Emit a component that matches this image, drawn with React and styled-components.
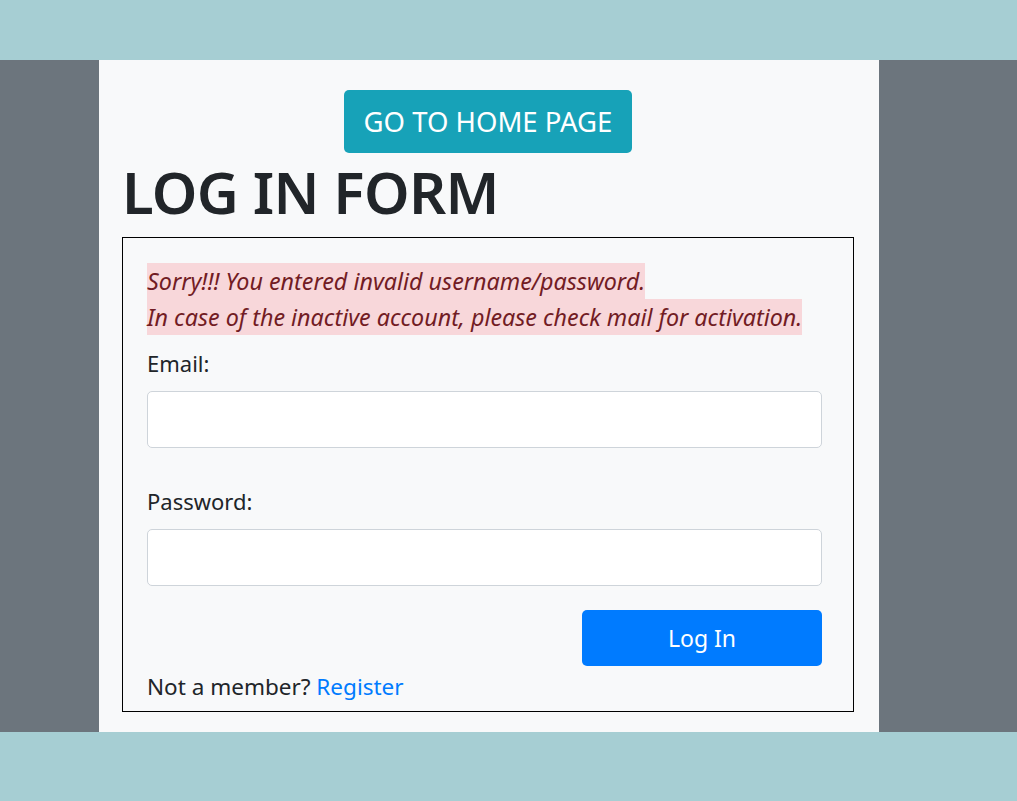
import styled, { createGlobalStyle } from 'styled-components';

const GlobalStyle = createGlobalStyle`
  body {
    margin: 0;
    font-family: "Noto Sans", "Open Sans", sans-serif;
    color: #212529;
    background: #6c757d;
  }
`;

const Page = styled.div`
  display: flex;
  flex-direction: column;
  min-height: 801px;
`;

const Band = styled.div`
  height: ${(props) => props.$height}px;
  background: #a6ced3;
`;

const Middle = styled.div`
  flex: 1;
  display: flex;
  background: #6c757d;
  padding-left: 99px;
`;

const Panel = styled.main`
  width: 780px;
  background: #f8f9fa;
  padding: 30px 25px 20px 23px;
  box-sizing: border-box;
  display: flex;
  flex-direction: column;
`;

const HomeButton = styled.a`
  align-self: center;
  padding: 0 20px;
  height: 63px;
  display: flex;
  align-items: center;
  background: #17a2b8;
  color: #fff;
  font-size: 27.5px;
  border-radius: 5px;
  text-decoration: none;
`;

const Title = styled.h1`
  margin: 4px 0 10px;
  font-size: 58px;
  font-weight: 600;
  line-height: 70px;
  letter-spacing: -0.65px;
`;

const FormBox = styled.form`
  border: 1px solid #000;
  padding: 25px 31px 9px 24px;
  display: flex;
  flex-direction: column;
`;

const Alert = styled.p`
  margin: 0 0 14px;
  font-style: italic;
  font-size: 23.3px;
  line-height: 36px;
  color: #721c24;

  span {
    background: #f8d7da;
    padding: 2px 0;
  }
`;

const Label = styled.label`
  display: block;
  font-size: 22px;
  line-height: 28px;
  margin-bottom: 14px;
`;

const Input = styled.input`
  display: block;
  width: 100%;
  box-sizing: border-box;
  height: 57px;
  border: 1px solid #ced4da;
  border-radius: 5px;
  background: #fff;
  margin-bottom: ${(props) => props.$gap}px;
  font-size: 20px;
  padding: 0 16px;
`;

const SubmitRow = styled.div`
  display: flex;
  justify-content: flex-end;
  margin-bottom: 6px;
`;

const SubmitButton = styled.button`
  width: 240px;
  height: 56px;
  border: none;
  border-radius: 5px;
  background: #007bff;
  color: #fff;
  font-family: inherit;
  font-size: 23px;
`;

const Footer = styled.p`
  margin: 0;
  font-size: 22.5px;
  line-height: 30px;

  a {
    color: #007bff;
    text-decoration: none;
  }
`;

export default function App() {
  return (
    <>
      <GlobalStyle />
      <Page>
        <Band $height={60} />
        <Middle>
          <Panel>
            <HomeButton href="#">GO TO HOME PAGE</HomeButton>
            <Title>LOG IN FORM</Title>
            <FormBox onSubmit={(e) => e.preventDefault()}>
              <Alert>
                <span>Sorry!!! You entered invalid username/password.</span>
                <br />
                <span>In case of the inactive account, please check mail for activation.</span>
              </Alert>
              <Label htmlFor="email">Email:</Label>
              <Input id="email" type="email" $gap={39} />
              <Label htmlFor="password">Password:</Label>
              <Input id="password" type="password" $gap={24} />
              <SubmitRow>
                <SubmitButton type="submit">Log In</SubmitButton>
              </SubmitRow>
              <Footer>
                Not a member? <a href="#">Register</a>
              </Footer>
            </FormBox>
          </Panel>
        </Middle>
        <Band $height={69} />
      </Page>
    </>
  );
}
